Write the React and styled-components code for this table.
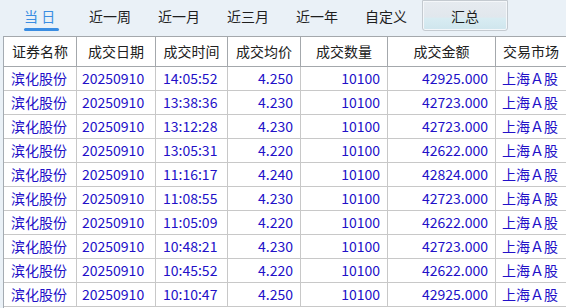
import React from 'react';
import styled, { createGlobalStyle } from 'styled-components';

const GlobalStyle = createGlobalStyle`
    html, body {
        margin: 0;
        padding: 0;
        background: #eaf1f7;
        overflow: hidden;
    }
    body {
        font-family: "Noto Sans CJK SC", "Noto Sans", sans-serif;
        font-size: 14px;
    }
`;

const TABS = ['当 日', '近一周', '近一月', '近三月', '近一年', '自定义'];

const ROWS = [
    ['14:05:52', '4.250', '42925.000'],
    ['13:38:36', '4.230', '42723.000'],
    ['13:12:28', '4.230', '42723.000'],
    ['13:05:31', '4.220', '42622.000'],
    ['11:16:17', '4.240', '42824.000'],
    ['11:08:55', '4.230', '42723.000'],
    ['11:05:09', '4.220', '42622.000'],
    ['10:48:21', '4.230', '42723.000'],
    ['10:45:52', '4.220', '42622.000'],
    ['10:10:47', '4.250', '42925.000'],
];

const COLS = '73px 79px 72px 73px 87px 108px 1fr';

export default function App() {
    return (
        <Page>
            <GlobalStyle />
            <Toolbar>
                {TABS.map((t, i) => (
                    <Tab key={t} active={i === 0}>{t}</Tab>
                ))}
                <SumButton>汇总</SumButton>
            </Toolbar>
            <Body>
                <Grid>
                    <HeadRow>
                        <HeadCell>证券名称</HeadCell>
                        <HeadCell>成交日期</HeadCell>
                        <HeadCell>成交时间</HeadCell>
                        <HeadCell>成交均价</HeadCell>
                        <HeadCell>成交数量</HeadCell>
                        <HeadCell>成交金额</HeadCell>
                        <HeadCell>交易市场</HeadCell>
                    </HeadRow>
                    {ROWS.map(([time, price, amount], i) => (
                        <Row key={i}>
                            <Cell>滨化股份</Cell>
                            <Cell pad="5px">20250910</Cell>
                            <Cell>{time}</Cell>
                            <Cell right>{price}</Cell>
                            <Cell right>10100</Cell>
                            <Cell right>{amount}</Cell>
                            <Cell pad="6px">上海Ａ股</Cell>
                        </Row>
                    ))}
                </Grid>
            </Body>
        </Page>
    );
}

const Page = styled.div`
    width: 566px;
    height: 308px;
    display: flex;
    flex-direction: column;
    background: #eaf1f7;
`;

const Toolbar = styled.div`
    height: 36px;
    display: flex;
    align-items: flex-start;
    padding-left: 24px;
    box-sizing: border-box;
`;

const Tab = styled.div`
    position: relative;
    width: ${p => (p.active ? '65px' : '69px')};
    height: 36px;
    line-height: 33px;
    color: ${p => (p.active ? '#3a8de2' : '#1e1e1e')};
    white-space: pre;

    &::after {
        content: '';
        display: ${p => (p.active ? 'block' : 'none')};
        position: absolute;
        left: 0;
        top: 28px;
        width: 35px;
        height: 3px;
        border-radius: 2px;
        background: #3a8de2;
    }
`;

const SumButton = styled.div`
    width: 86px;
    height: 31px;
    margin-left: -12px;
    box-sizing: border-box;
    border: 1px solid #c4cad0;
    border-radius: 0 0 3px 3px;
    box-shadow: inset 0 0 0 1px #f4f7fa;
    background: linear-gradient(
        #e6ebf0 0%,
        #e1e7ed 55%,
        #d8ecf2 60%,
        #cfe5ed 100%
    );
    text-align: center;
    line-height: 31px;
    color: #1e1e1e;
`;

const Body = styled.div`
    flex: 1;
    padding-left: 3px;
    overflow: hidden;
`;

const Grid = styled.div`
    background: #ffffff;
    border-left: 1px solid #a4abb2;
    height: 100%;
`;

const HeadRow = styled.div`
    display: grid;
    grid-template-columns: ${COLS};
    height: 31px;
    box-sizing: border-box;
    border-top: 1px solid #a4a8ac;
    border-bottom: 1px solid #a4a8ac;
`;

const HeadCell = styled.div`
    border-right: 1px solid #a4a8ac;
    text-align: center;
    line-height: 28px;
    color: #202020;
    &:last-child {
        border-right: none;
    }
`;

const Row = styled.div`
    display: grid;
    grid-template-columns: ${COLS};
    height: 24px;
    box-sizing: border-box;
    border-bottom: 1px solid #c8c8c8;
`;

const Cell = styled.div`
    border-right: 1px solid #c8c8c8;
    line-height: 23px;
    color: #2210c8;
    text-align: ${p => (p.right ? 'right' : 'left')};
    padding: ${p => (p.right ? '0 7px 0 0' : `0 0 0 ${p.pad || '7px'}`)};
    white-space: nowrap;
    overflow: hidden;
    &:last-child {
        border-right: none;
    }
`;
